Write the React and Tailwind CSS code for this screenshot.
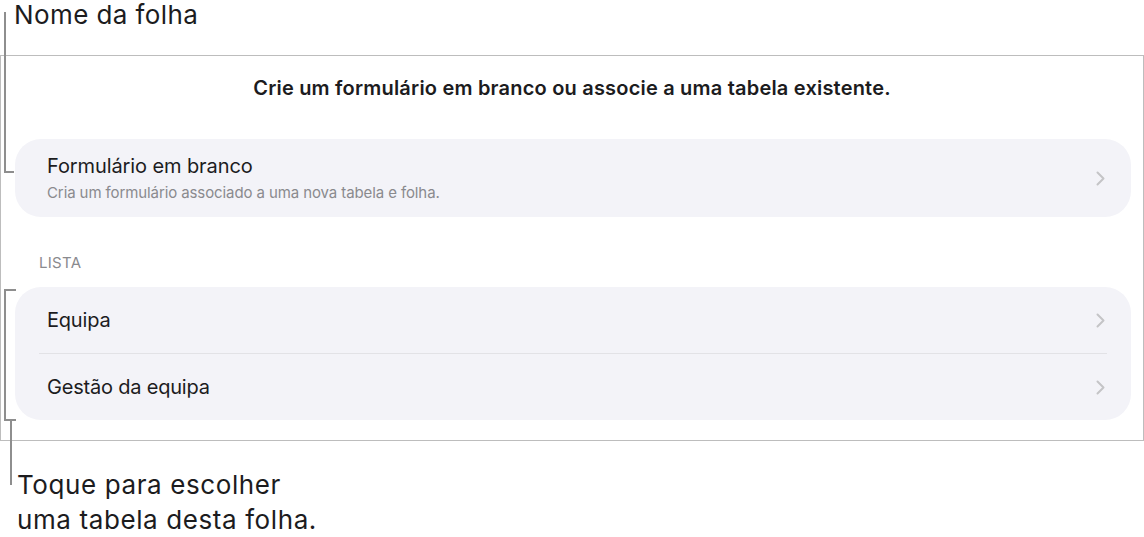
import React from "react";

function Chevron() {
  return (
    <svg width="9" height="15" viewBox="0 0 9 15" fill="none" className="shrink-0">
      <path d="M1.5 1.5 L7.5 7.5 L1.5 13.5" stroke="#c4c4c7" strokeWidth="2" strokeLinecap="round" strokeLinejoin="round" />
    </svg>
  );
}

export default function App() {
  return (
    <div
      className="relative w-[1144px] h-[537px] bg-white text-[#1c1c1e] overflow-hidden"
      style={{ fontFamily: "Inter, 'Noto Sans', sans-serif" }}
    >
      <div className="h-[55px] pl-[14px] text-[26px] leading-[30px] tracking-[0.4px]">Nome da folha</div>

      <div className="w-[1144px] h-[386px] border border-[#bdbdbd] flex flex-col">
        <div className="pt-[20px] text-center text-[20px] leading-[24px] font-semibold tracking-[0.2px]">
          Crie um formulário em branco ou associe a uma tabela existente.
        </div>

        <div className="mt-[39px] ml-[14px] mr-[12px] h-[78px] shrink-0 rounded-[26px] bg-[#f3f3f8] flex items-center pl-[32px] pr-[26px]">
          <div className="flex-1 flex flex-col">
            <div className="text-[20px] leading-[24px] tracking-[-0.1px]">Formulário em branco</div>
            <div className="mt-[6px] text-[15px] leading-[18px] tracking-[-0.1px] text-[#8a8a8e]">
              Cria um formulário associado a uma nova tabela e folha.
            </div>
          </div>
          <Chevron />
        </div>

        <div className="mt-[37px] pl-[38px] text-[15px] leading-[18px] tracking-[0.3px] text-[#8a8a8e]">LISTA</div>

        <div className="mt-[15px] ml-[14px] mr-[12px] h-[133px] shrink-0 rounded-[26px] bg-[#f3f3f8] flex flex-col pl-[24px]">
          <div className="h-[66px] flex items-center pl-[8px] pr-[26px]">
            <div className="flex-1 text-[20px] leading-[24px] tracking-[-0.2px]">Equipa</div>
            <Chevron />
          </div>
          <div className="h-px bg-[#e2e2e6] mr-[24px]" />
          <div className="h-[66px] flex items-center pl-[8px] pr-[26px]">
            <div className="flex-1 text-[20px] leading-[24px] tracking-[-0.2px]">Gestão da equipa</div>
            <Chevron />
          </div>
        </div>
      </div>

      <div className="pl-[17px] pt-[26px] text-[26px] leading-[35px] tracking-[0.6px]">
        Toque para escolher
        <br />
        uma tabela desta folha.
      </div>

      {/* callout bracket 1 */}
      <div className="absolute left-[4px] top-[12px] w-[10px] h-[161px] border-l-2 border-b-2 border-[#8e8e8e]" />
      {/* callout bracket 2 */}
      <div className="absolute left-[4px] top-[289px] w-[12px] h-[132px] border-l-2 border-t-2 border-b-2 border-[#8e8e8e]" />
      <div className="absolute left-[10px] top-[421px] w-[2px] h-[64px] bg-[#8e8e8e]" />
    </div>
  );
}
